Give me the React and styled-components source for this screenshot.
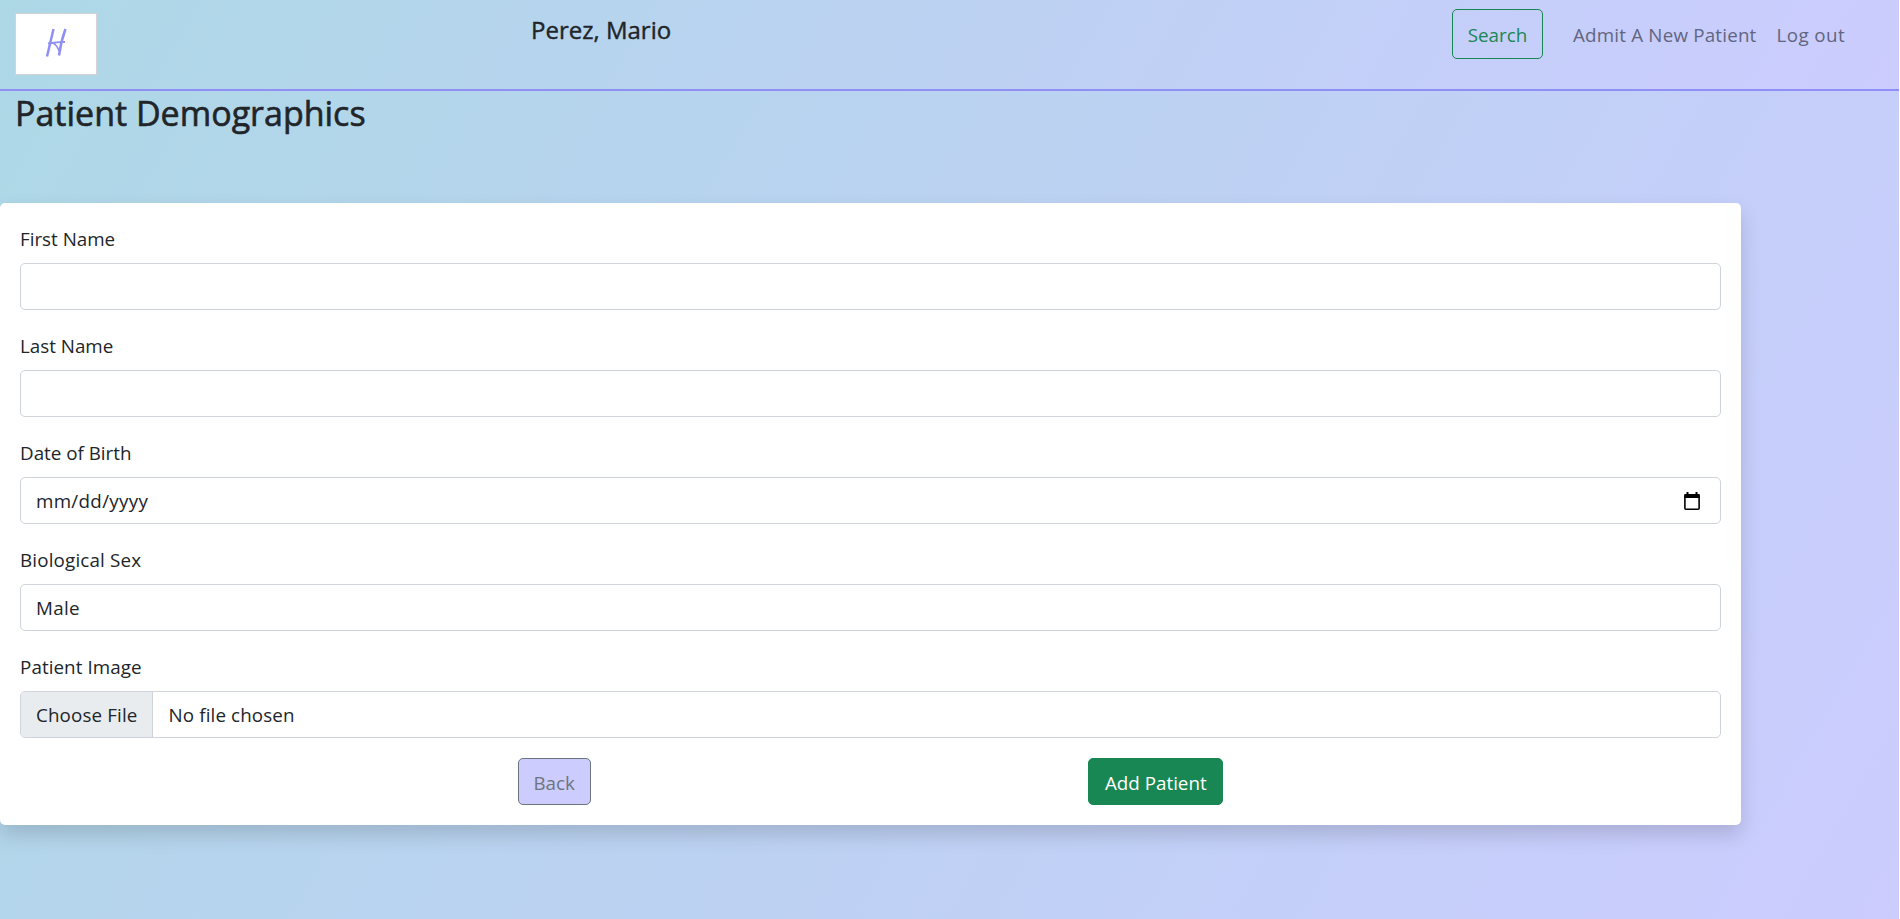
import React from "react";
import styled, { createGlobalStyle } from "styled-components";

const GlobalStyle = createGlobalStyle`
  *, *::before, *::after { box-sizing: border-box; }
  html { background: #fff; }
  body {
    margin: 0;
    overflow: hidden;
    color: #212529;
    font-family: "Open Sans", "Noto Sans", sans-serif;
    font-size: 18.8px;
    line-height: 30px;
  }
`;

const Page = styled.div`
  width: calc(100vw - 1px);
  height: 100vh;
  background: linear-gradient(120deg, lightblue, #ccccff);
`;

const Navbar = styled.header`
  display: flex;
  align-items: flex-start;
  height: 91px;
  padding: 9px 54px 0 15px;
  background: linear-gradient(120deg, lightblue, #ccccff);
  border-bottom: 2px solid #8f8ff5;
`;

const Brand = styled.a`
  display: block;
  width: 82px;
  height: 62px;
  margin-top: 4px;
  background: #fff;
  border: 1px solid #d3d3d3;

  svg { display: block; }
`;

const PatientName = styled.h5`
  margin: 6px 0 0 434px;
  font-size: 24px;
  font-weight: 400;
  line-height: 30px;
  -webkit-text-stroke: 0.4px currentColor;
`;

const Nav = styled.nav`
  display: flex;
  margin-left: auto;
`;

const NavLink = styled.a`
  margin-left: ${(p) => p.$gap}px;
  color: #62657f;
  line-height: 52px;
  letter-spacing: ${(p) => p.$track || 0}px;
`;

const Button = styled.button`
  width: ${(p) => p.$width}px;
  height: ${(p) => p.$height || 47}px;
  padding: 2px 0 0;
  font: inherit;
  color: ${(p) => p.$color};
  background: ${(p) => p.$fill || "transparent"};
  border: 1px solid ${(p) => p.$border};
  border-radius: 5px;
`;

const Title = styled.h2`
  height: 112px;
  margin: 0;
  padding: 1px 0 0 15px;
  font-size: 34px;
  font-weight: 400;
  line-height: 42px;
  -webkit-text-stroke: 0.6px currentColor;
`;

const Card = styled.form`
  width: 1741px;
  height: 622px;
  padding: 20px;
  background: #fff;
  border-radius: 5px;
  box-shadow: 0 10px 20px rgba(0, 0, 0, 0.15);
`;

const Field = styled.div`
  height: 107px;
`;

const Label = styled.label`
  display: block;
  height: 40px;
  padding-top: 1px;
  letter-spacing: ${(p) => p.$track || 0}px;
`;

const Control = styled.div`
  display: flex;
  justify-content: space-between;
  width: 100%;
  height: 47px;
  padding: 1px 20px 0 15px;
  line-height: 45px;
  letter-spacing: 0.3px;
  background: #fff;
  border: 1px solid #ced4da;
  border-radius: 5px;
`;

const FilePicker = styled(Control)`
  justify-content: flex-start;
  padding: 0;
  overflow: hidden;
  letter-spacing: 0.13px;
`;

const FileButton = styled.span`
  width: 132px;
  padding: 1px 0 0 15px;
  background: #e9ecef;
  border-right: 1px solid #ced4da;
`;

const FileName = styled.span`
  padding: 1px 0 0 15.5px;
`;

const Actions = styled.div`
  display: flex;
  justify-content: space-evenly;
`;

const CalendarIcon = styled.svg`
  margin-top: 13px;
`;

export default function App() {
  return (
    <>
      <GlobalStyle />
      <Page>
        <Navbar>
          <Brand>
            <svg width="80" height="60" fill="none" stroke="#8f8ff5" strokeWidth="2.5">
              <path d="M37.5 15 L31 42.5 M49.5 15 Q45 27 43 41.5" />
              <path d="M32 29.5 Q41 28 49 28" strokeWidth="2" />
              <path d="M37 29 Q41 31 43 37" strokeWidth="1.5" />
            </svg>
          </Brand>
          <PatientName>Perez, Mario</PatientName>
          <Nav>
            <Button type="button" $width={91} $height={50} $color="#198754" $border="#198754">Search</Button>
            <NavLink $gap={30} $track={0.19}>Admit A New Patient</NavLink>
            <NavLink $gap={20} $track={0.4}>Log out</NavLink>
          </Nav>
        </Navbar>
        <Title>Patient Demographics</Title>
        <Card>
          <Field>
            <Label>First Name</Label>
            <Control as="input" type="text" />
          </Field>
          <Field>
            <Label>Last Name</Label>
            <Control as="input" type="text" />
          </Field>
          <Field>
            <Label>Date of Birth</Label>
            <Control>
              <span>mm/dd/yyyy</span>
              <CalendarIcon width="16" height="19" viewBox="0 0 16 19">
                <rect x="0.9" y="2.9" width="14.2" height="14.4" rx="1" fill="none" stroke="#000" strokeWidth="1.6" />
                <path d="M0.5 2h15v4h-15zM2.5 0h2v3h-2zM11.5 0h2v3h-2z" />
              </CalendarIcon>
            </Control>
          </Field>
          <Field>
            <Label $track={0.17}>Biological Sex</Label>
            <Control>Male</Control>
          </Field>
          <Field>
            <Label $track={0.08}>Patient Image</Label>
            <FilePicker>
              <FileButton>Choose File</FileButton>
              <FileName>No file chosen</FileName>
            </FilePicker>
          </Field>
          <Actions>
            <Button type="button" $width={73} $color="#6c757d" $fill="#ccccff" $border="#6c757d">Back</Button>
            <Button type="button" $width={135} $color="#fff" $fill="#198754" $border="#198754">Add Patient</Button>
          </Actions>
        </Card>
      </Page>
    </>
  );
}
